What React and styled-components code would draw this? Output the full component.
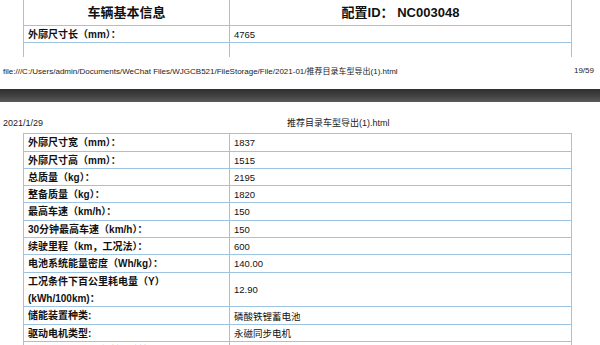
import React from 'react';
import styled, { createGlobalStyle } from 'styled-components';

const GlobalStyle = createGlobalStyle`
  html, body {
    margin: 0;
    padding: 0;
    background: #ffffff;
    overflow: hidden;
  }
  body {
    width: 600px;
    height: 345px;
    font-family: "Liberation Sans", "Noto Sans CJK SC", sans-serif;
    color: #111;
  }
`;

const LINE = '#9fc4e2';

const detailRows = [
  { label: '外廓尺寸宽（mm）：', value: '1837' },
  { label: '外廓尺寸高（mm）：', value: '1515' },
  { label: '总质量（kg）：', value: '2195' },
  { label: '整备质量（kg）：', value: '1820' },
  { label: '最高车速（km/h）：', value: '150' },
  { label: '30分钟最高车速（km/h）：', value: '150' },
  { label: '续驶里程（km，工况法）：', value: '600' },
  { label: '电池系统能量密度（Wh/kg）：', value: '140.00' },
  { label: ['工况条件下百公里耗电量（Y）', '(kWh/100km)：'], value: '12.90', tall: true },
  { label: '储能装置种类:', value: '磷酸铁锂蓄电池' },
  { label: '驱动电机类型:', value: '永磁同步电机' },
  { label: ['驱动电机峰值功率/转速/转矩（kW', '/r/min/N·m）：'], value: '', tall: true },
];

function App() {
  return (
    <>
      <GlobalStyle />
      <Page>
        <Sheet>
          <Table>
            <HeadRow>
              <HeadCell>车辆基本信息</HeadCell>
              <HeadCell>配置ID：&nbsp;NC003048</HeadCell>
            </HeadRow>
            <Row>
              <Label>外廓尺寸长（mm）：</Label>
              <Value>4765</Value>
            </Row>
            <Row $open>
              <Label />
              <Value />
            </Row>
          </Table>
          <PrintFooter>
            <span>file:///C:/Users/admin/Documents/WeChat Files/WJGCB521/FileStorage/File/2021-01/推荐目录车型导出(1).html</span>
            <span>19/59</span>
          </PrintFooter>
        </Sheet>

        <PageBreak />

        <Sheet>
          <PrintHeader>
            <span>2021/1/29</span>
            <span>推荐目录车型导出(1).html</span>
          </PrintHeader>
          <Table $top>
            {detailRows.map((row, i) => (
              <Row key={i} $tall={row.tall}>
                <Label>
                  {Array.isArray(row.label)
                    ? row.label.map((line, j) => <div key={j}>{line}</div>)
                    : row.label}
                </Label>
                <Value>{row.value}</Value>
              </Row>
            ))}
          </Table>
        </Sheet>
      </Page>
    </>
  );
}

export default App;

const Page = styled.div`
  width: 600px;
  height: 345px;
  overflow: hidden;
  display: flex;
  flex-direction: column;
  & > * {
    flex-shrink: 0;
  }
`;

const Sheet = styled.div`
  display: flex;
  flex-direction: column;
`;

const Table = styled.div`
  margin-left: 23px;
  width: 547px;
  border-left: 1px solid ${LINE};
  border-right: 1px solid ${LINE};
  border-top: ${(p) => (p.$top ? `1px solid ${LINE}` : 'none')};
`;

const HeadRow = styled.div`
  display: grid;
  grid-template-columns: 206px 1fr;
  height: 26px;
  box-sizing: border-box;
  border-bottom: 1px solid ${LINE};
`;

const HeadCell = styled.div`
  display: flex;
  align-items: center;
  justify-content: center;
  padding-bottom: 2px;
  font-size: 13px;
  font-weight: 700;
  &:first-child {
    border-right: 1px solid ${LINE};
  }
`;

const Row = styled.div`
  display: grid;
  grid-template-columns: 206px 1fr;
  height: ${(p) => (p.$tall ? '34.6px' : p.$open ? '14px' : '17.3px')};
  box-sizing: border-box;
  border-bottom: ${(p) => (p.$open ? 'none' : `1px solid ${LINE}`)};
`;

const Label = styled.div`
  display: flex;
  flex-direction: column;
  justify-content: center;
  padding-left: 4px;
  border-right: 1px solid ${LINE};
  font-size: 10px;
  font-weight: 700;
  line-height: 17px;
  white-space: nowrap;
`;

const Value = styled.div`
  display: flex;
  align-items: center;
  padding-left: 4px;
  font-size: 9.5px;
  white-space: nowrap;
`;

const PrintFooter = styled.div`
  display: flex;
  justify-content: space-between;
  align-items: center;
  height: 12px;
  margin-top: 7px;
  padding: 0 6px 0 3px;
  font-size: 8px;
  color: #222;
`;

const PageBreak = styled.div`
  margin-top: 13px;
  height: 13px;
  background: linear-gradient(#2f2f2f, #454545 60%, #5a5a5a);
`;

const PrintHeader = styled.div`
  display: grid;
  grid-template-columns: 284px auto;
  align-items: center;
  height: 12px;
  margin-top: 14px;
  margin-bottom: 5px;
  padding-left: 3px;
  font-size: 9px;
  color: #222;
`;
